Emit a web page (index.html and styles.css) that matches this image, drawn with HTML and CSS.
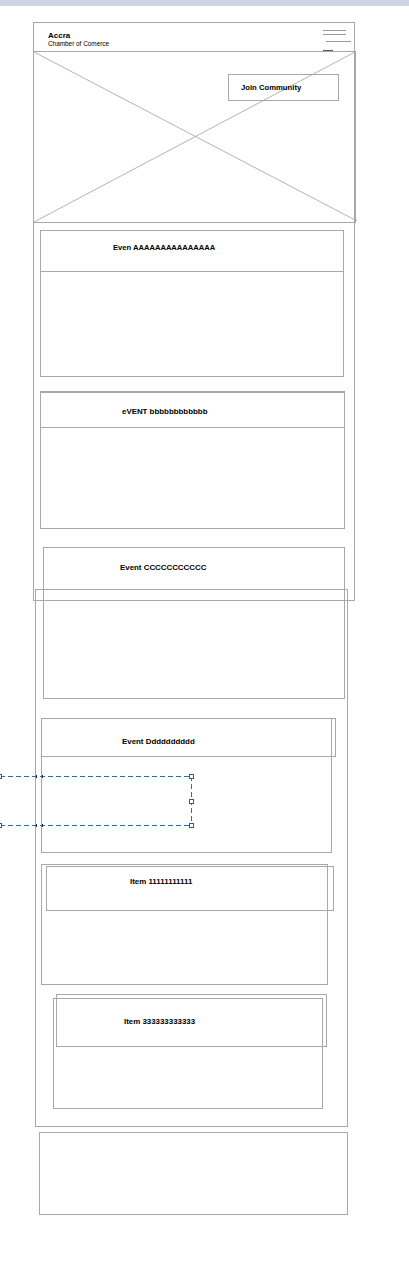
FILE: index.html
```html
<!DOCTYPE html>
<html lang="en">
<head>
<meta charset="utf-8">
<title>Accra Chamber of Comerce</title>
<link rel="stylesheet" href="styles.css">
</head>
<body>
<div class="sheet">
  <div class="band"></div>
  <div class="frame frame-top"></div>
  <div class="frame frame-bottom"></div>

  <header class="top">
    <div class="brand">
      <div class="brand-name">Accra</div>
      <div class="brand-sub">Chamber of Comerce</div>
    </div>
    <svg class="menu" width="30" height="29" viewBox="0 0 30 29">
      <line x1="0" y1="8.5" x2="23" y2="8.5" />
      <line x1="0" y1="12.5" x2="23" y2="12.5" />
      <line x1="3" y1="19.5" x2="28" y2="19.5" />
      <line class="menu-dark" x1="0" y1="28.5" x2="10" y2="28.5" />
    </svg>
  </header>

  <section class="hero">
    <svg class="hero-x" viewBox="0 0 321 170" preserveAspectRatio="none">
      <line x1="0" y1="0" x2="323" y2="169" />
      <line x1="321" y1="0" x2="0" y2="170" />
    </svg>
    <div class="join">Join Community</div>
  </section>

  <div class="card card-a">
    <div class="head head-a">Even AAAAAAAAAAAAAAA</div>
  </div>

  <div class="card card-b">
    <div class="head head-b">eVENT bbbbbbbbbbbb</div>
  </div>

  <div class="card card-c">
    <div class="head head-c">Event CCCCCCCCCCC</div>
  </div>

  <div class="card card-d">
    <div class="head head-d">Event Dddddddddd</div>
  </div>

  <div class="card card-e">
    <div class="head head-e">Item 11111111111</div>
  </div>

  <div class="card card-f">
    <div class="head head-f">Item 333333333333</div>
  </div>

  <footer class="foot"></footer>

  <svg class="selection" width="200" height="58" viewBox="0 0 200 58">
    <g class="sel-lines">
      <line x1="0" y1="4.5" x2="191" y2="4.5" />
      <line x1="0" y1="53.5" x2="191" y2="53.5" />
      <line x1="191.5" y1="4" x2="191.5" y2="53" />
    </g>
    <g class="sel-ticks">
      <line x1="36.5" y1="3" x2="36.5" y2="6" />
      <line x1="42.5" y1="3" x2="42.5" y2="6" />
      <line x1="36.5" y1="52" x2="36.5" y2="55" />
      <line x1="42.5" y1="52" x2="42.5" y2="55" />
    </g>
    <g class="sel-handles">
      <rect x="189.5" y="2.5" width="4" height="4" />
      <rect x="189.5" y="27.5" width="4" height="4" />
      <rect x="189.5" y="51.5" width="4" height="4" />
      <rect x="-2.5" y="2.5" width="4" height="4" />
      <rect x="-2.5" y="51.5" width="4" height="4" />
    </g>
  </svg>
</div>
</body>
</html>
```
FILE: styles.css
```css
* {
  box-sizing: border-box;
  margin: 0;
  padding: 0;
}

body {
  background: #fff;
  font-family: "Liberation Sans", Arial, sans-serif;
  color: #000;
}

.sheet {
  position: relative;
  width: 409px;
  height: 1263px;
  display: flex;
  flex-direction: column;
  align-items: flex-start;
  overflow: hidden;
}

.band {
  align-self: stretch;
  height: 6px;
  background: #cdd5e3;
}

.frame {
  position: absolute;
  border: 1px solid #a8a8a8;
  pointer-events: none;
}

.frame-top {
  left: 33px;
  top: 22px;
  width: 322px;
  height: 579px;
}

.frame-bottom {
  left: 35px;
  top: 589px;
  width: 313px;
  height: 538px;
}

/* header */
.top {
  margin: 16px 0 0 33px;
  width: 322px;
  height: 29px;
  display: flex;
  justify-content: space-between;
  padding: 9px 0 0 15px;
}

.brand-name {
  font-weight: 700;
  font-size: 8px;
  line-height: 9px;
}

.brand-sub {
  font-size: 6.4px;
  line-height: 8px;
}

.menu {
  margin: -9px 2px 0 0;
}

.menu line {
  stroke: #9a9a9a;
  stroke-width: 1;
}

.menu .menu-dark {
  stroke: #555;
}

/* hero placeholder */
.hero {
  position: relative;
  margin-left: 33px;
  width: 323px;
  height: 172px;
  border: 1px solid #a8a8a8;
  padding: 22px 0 0 194px;
}

.hero-x {
  position: absolute;
  left: 0;
  top: 0;
  width: 321px;
  height: 170px;
  overflow: visible;
}

.hero-x line {
  stroke: #a0a0a0;
  stroke-width: 0.8;
}

.join {
  position: relative;
  width: 111px;
  height: 27px;
  border: 1px solid #a8a8a8;
  display: flex;
  align-items: center;
  padding-left: 12px;
  font-weight: 700;
  font-size: 7.7px;
}

/* cards */
.card {
  border: 1px solid #a8a8a8;
}

.head {
  font-weight: 700;
  font-size: 7.9px;
  line-height: 10px;
  white-space: nowrap;
}

.card-a {
  margin: 7px 0 0 40px;
  width: 304px;
  height: 147px;
}

.head-a {
  height: 41px;
  border-bottom: 1px solid #a8a8a8;
  padding: 12px 0 0 72px;
  font-size: 7.6px;
}

.card-b {
  margin: 14px 0 0 40px;
  width: 305px;
  height: 138px;
}

.head-b {
  margin: 0 -1px;
  height: 36px;
  border: 1px solid #a8a8a8;
  padding: 14px 0 0 81px;
}

.card-c {
  margin: 18px 0 0 43px;
  width: 302px;
  height: 152px;
}

.head-c {
  height: 40px;
  padding: 15px 0 0 76px;
}

.card-d {
  margin: 19px 0 0 41px;
  width: 291px;
  height: 135px;
}

.head-d {
  margin: -1px 0 0 -1px;
  width: 295px;
  height: 39px;
  border: 1px solid #a8a8a8;
  padding: 18px 0 0 80px;
}

.card-e {
  margin: 11px 0 0 41px;
  width: 287px;
  height: 121px;
}

.head-e {
  margin: 1px 0 0 4px;
  width: 288px;
  height: 45px;
  border: 1px solid #a8a8a8;
  padding: 10px 0 0 83px;
}

.card-f {
  margin: 13px 0 0 53px;
  width: 270px;
  height: 111px;
}

.head-f {
  margin: -5px 0 0 2px;
  width: 271px;
  height: 53px;
  border: 1px solid #a8a8a8;
  padding: 22px 0 0 67px;
}

.foot {
  margin: 23px 0 0 39px;
  width: 309px;
  height: 83px;
  border: 1px solid #a8a8a8;
}

/* selection overlay */
.selection {
  position: absolute;
  left: 0;
  top: 772px;
  overflow: visible;
}

.sel-lines line {
  stroke: #1673cf;
  stroke-width: 1;
  stroke-dasharray: 5 3;
}

.sel-ticks line {
  stroke: #222;
  stroke-width: 1;
}

.sel-handles rect {
  fill: #fff;
  stroke: #555;
  stroke-width: 1;
}
```
